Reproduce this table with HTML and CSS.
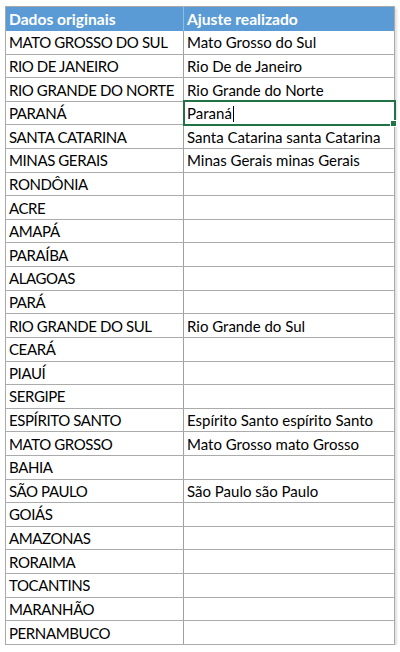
FILE: index.html
```html
<!DOCTYPE html>
<html lang="pt-BR">
<head>
<meta charset="utf-8">
<title>Dados originais</title>
<link rel="stylesheet" href="styles.css">
</head>
<body>
<div class="sheet">
<table class="grid">
  <colgroup><col class="c1"><col class="c2"></colgroup>
  <thead>
    <tr class="hrow"><th class="h1">Dados originais</th><th class="h2">Ajuste realizado</th></tr>
  </thead>
  <tbody>
    <tr><td>MATO GROSSO DO SUL</td><td class="adj">Mato Grosso do Sul</td></tr>
    <tr><td>RIO DE JANEIRO</td><td class="adj">Rio De de Janeiro</td></tr>
    <tr><td>RIO GRANDE DO NORTE</td><td class="adj">Rio Grande do Norte</td></tr>
    <tr><td>PARANÁ</td><td class="adj active">Paraná<span class="caret"></span></td></tr>
    <tr><td>SANTA CATARINA</td><td class="adj">Santa Catarina santa Catarina</td></tr>
    <tr><td>MINAS GERAIS</td><td class="adj">Minas Gerais minas Gerais</td></tr>
    <tr><td>RONDÔNIA</td><td class="adj"></td></tr>
    <tr><td>ACRE</td><td class="adj"></td></tr>
    <tr><td>AMAPÁ</td><td class="adj"></td></tr>
    <tr><td>PARAÍBA</td><td class="adj"></td></tr>
    <tr><td>ALAGOAS</td><td class="adj"></td></tr>
    <tr><td>PARÁ</td><td class="adj"></td></tr>
    <tr><td>RIO GRANDE DO SUL</td><td class="adj">Rio Grande do Sul</td></tr>
    <tr><td>CEARÁ</td><td class="adj"></td></tr>
    <tr><td>PIAUÍ</td><td class="adj"></td></tr>
    <tr><td>SERGIPE</td><td class="adj"></td></tr>
    <tr><td>ESPÍRITO SANTO</td><td class="adj">Espírito Santo espírito Santo</td></tr>
    <tr><td>MATO GROSSO</td><td class="adj">Mato Grosso mato Grosso</td></tr>
    <tr><td>BAHIA</td><td class="adj"></td></tr>
    <tr><td>SÃO PAULO</td><td class="adj">São Paulo são Paulo</td></tr>
    <tr><td>GOIÁS</td><td class="adj"></td></tr>
    <tr><td>AMAZONAS</td><td class="adj"></td></tr>
    <tr><td>RORAIMA</td><td class="adj"></td></tr>
    <tr><td>TOCANTINS</td><td class="adj"></td></tr>
    <tr><td>MARANHÃO</td><td class="adj"></td></tr>
    <tr><td>PERNAMBUCO</td><td class="adj"></td></tr>
  </tbody>
</table>
</div>
</body>
</html>
```
FILE: styles.css
```css
html, body {
  margin: 0;
  padding: 0;
  background: #ffffff;
}
.sheet {
  padding: 6px 0 0 5px;
}
.grid {
  border-collapse: collapse;
  table-layout: fixed;
  width: 389px;
  border: 1px solid #a9a9a9;
  font-family: "Lato", "Liberation Sans", sans-serif;
  font-size: 15px;
  color: #000;
  box-shadow: 2px 2px 2px rgba(0,0,0,0.12);
}
.c1 { width: 178px; }
.c2 { width: 211px; }
.hrow { height: 24px; }
tbody tr { height: 23.62px; }
th {
  background: #5b9bd5;
  color: #fff;
  font-weight: bold;
  font-size: 15.6px;
  text-align: left;
  padding: 0 0 0 3px;
  white-space: nowrap;
}
.h2 {
  border-left: 1px solid #8fbbe3;
}
td {
  padding: 0 0 0 3px;
  border-bottom: 1px solid #ababab;
  white-space: nowrap;
  overflow: visible;
}
.c1, td:first-child {
  letter-spacing: -0.4px;
}
.adj {
  border-left: 1px solid #a0a0a0;
  letter-spacing: 0;
}
.active {
  position: relative;
  outline: 2px solid #217346;
  outline-offset: -1px;
}
.active::after {
  content: "";
  position: absolute;
  right: -3px;
  bottom: -3px;
  width: 5px;
  height: 5px;
  background: #217346;
  border: 1px solid #fff;
}
.caret {
  display: inline-block;
  width: 1px;
  height: 16px;
  background: #000;
  margin-left: 1px;
  vertical-align: -3px;
}
```
